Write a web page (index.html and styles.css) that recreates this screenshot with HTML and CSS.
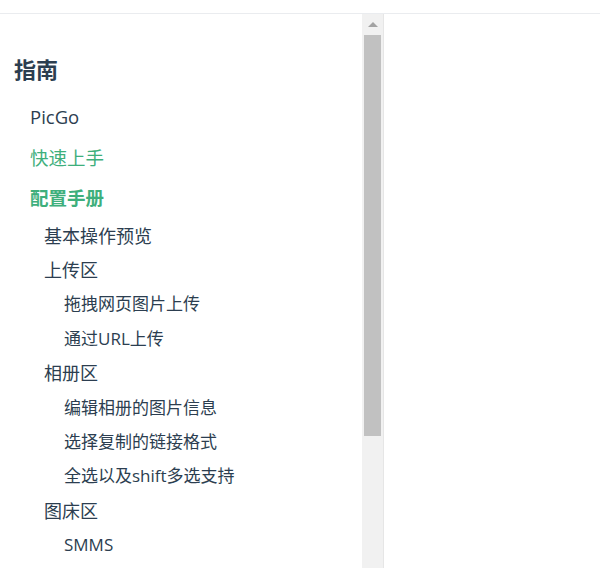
FILE: index.html
```html
<!DOCTYPE html>
<html lang="zh-CN">
<head>
<meta charset="utf-8">
<title>PicGo 指南</title>
<link rel="stylesheet" href="styles.css">
</head>
<body>
<div class="topbar"></div>
<div class="layout">
  <aside class="sidebar">
    <nav class="sidebar-content">
      <p class="heading">指南</p>
      <a class="l1">PicGo</a>
      <a class="l1 active">快速上手</a>
      <a class="l1 active bold">配置手册</a>
      <a class="l2">基本操作预览</a>
      <a class="l2">上传区</a>
      <a class="l3">拖拽网页图片上传</a>
      <a class="l3">通过URL上传</a>
      <a class="l2">相册区</a>
      <a class="l3">编辑相册的图片信息</a>
      <a class="l3">选择复制的链接格式</a>
      <a class="l3">全选以及shift多选支持</a>
      <a class="l2">图床区</a>
      <a class="l3">SMMS</a>
    </nav>
    <div class="scrollbar">
      <div class="arrow-btn"><span class="arrow"></span></div>
      <div class="thumb"></div>
    </div>
  </aside>
  <main class="main"></main>
</div>
</body>
</html>
```

FILE: styles.css
```css
html, body {
  margin: 0;
  padding: 0;
  background: #fff;
  height: 100%;
  overflow: hidden;
}
body {
  font-family: "Open Sans", "Noto Sans CJK SC", sans-serif;
  color: #2c3e50;
}
.topbar {
  height: 13px;
  border-bottom: 1px solid #eaecef;
}
.layout {
  display: flex;
  height: 554px;
}
.sidebar {
  display: flex;
  border-right: 1px solid #e6e6e6;
}
.sidebar-content {
  width: 362px;
  padding-top: 40px;
  display: flex;
  flex-direction: column;
  box-sizing: border-box;
}
.heading {
  margin: 0 0 12px 14px;
  font-size: 22px;
  font-weight: 700;
  line-height: 31px;
  height: 31px;
}
.l1, .l2, .l3 {
  display: block;
  white-space: nowrap;
  color: #2c3e50;
}
.l1 {
  padding-left: 30px;
  font-size: 18.5px;
  line-height: 40.5px;
}
.l1.active { color: #3eaf7c; }
.l1.bold { font-weight: 700; }
.l2, .l3 {
  line-height: 34.4px;
}
.l2 {
  padding-left: 44px;
  font-size: 18px;
}
.l3 {
  padding-left: 64px;
  font-size: 17px;
}
.scrollbar {
  width: 21px;
  background: #f1f1f1;
  display: flex;
  flex-direction: column;
  align-items: center;
}
.arrow-btn {
  height: 21px;
  width: 100%;
  display: flex;
  justify-content: center;
  align-items: center;
}
.arrow {
  width: 0;
  height: 0;
  border-left: 5px solid transparent;
  border-right: 5px solid transparent;
  border-bottom: 5px solid #a3a3a3;
}
.thumb {
  width: 17px;
  height: 401px;
  background: #c1c1c1;
}
.main {
  flex: 1;
}
```
